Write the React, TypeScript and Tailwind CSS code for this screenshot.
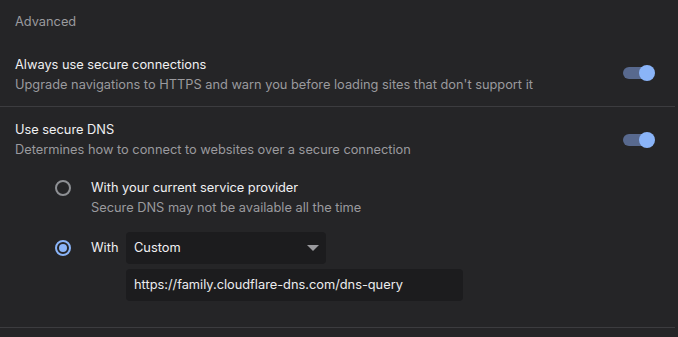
import { useState } from "react";

function Toggle({ on }: { on: boolean }) {
  return (
    <div className="relative h-[12px] w-[28px] shrink-0 rounded-full bg-[#58698e]">
      <span
        className={`absolute top-1/2 h-[16px] w-[16px] -translate-y-1/2 rounded-full bg-[#8ab4f8] ${
          on ? "right-[-4px]" : "left-[-4px]"
        }`}
      />
    </div>
  );
}

function Radio({ checked }: { checked: boolean }) {
  return (
    <span
      className={`flex h-[16px] w-[16px] shrink-0 items-center justify-center rounded-full border-2 ${
        checked ? "border-[#8ab4f8]" : "border-[#8e9094]"
      }`}
    >
      {checked && <span className="h-[8px] w-[8px] rounded-full bg-[#8ab4f8]" />}
    </span>
  );
}

export default function App() {
  const [mode] = useState<"provider" | "custom">("custom");

  return (
    <div
      className="h-[337px] w-[678px] overflow-hidden bg-[#252527] text-[12.8px] leading-[20px] text-[#e3e3e3]"
      style={{ fontFamily: "Inter, 'Liberation Sans', sans-serif" }}
    >
      <div className="w-[675px]">
        <div className="flex h-[40px] items-center px-[15px] pt-[3px] text-[#9a9a9e]">Advanced</div>

        <div className="flex h-[66px] items-center justify-between pl-[15px] pr-[24px]">
          <div className="pt-[3px]">
            <div className="text-[#f0f0f2]">Always use secure connections</div>
            <div className="text-[#9a9a9e]">
              Upgrade navigations to HTTPS and warn you before loading sites that don't support it
            </div>
          </div>
          <Toggle on />
        </div>

        <div className="border-t border-[#3c3c3f]">
          <div className="flex items-center justify-between pl-[15px] pr-[24px] pt-[13px]">
            <div>
              <div className="text-[#f0f0f2]">Use secure DNS</div>
              <div className="text-[#9a9a9e]">Determines how to connect to websites over a secure connection</div>
            </div>
            <Toggle on />
          </div>

          <div className="flex flex-col pb-[26px] pl-[55px] pt-[18px]">
            <div className="flex items-start gap-[20px]">
              <div className="mt-[2px]">
                <Radio checked={mode === "provider"} />
              </div>
              <div>
                <div className="text-[#f0f0f2]">With your current service provider</div>
                <div className="text-[#9a9a9e]">Secure DNS may not be available all the time</div>
              </div>
            </div>

            <div className="mt-[14px] flex items-center gap-[20px]">
              <Radio checked={mode === "custom"} />
              <div className="flex items-center gap-[7px]">
                <span className="w-[28px] text-[#f0f0f2]">With</span>
                <div className="flex h-[32px] w-[200px] items-center justify-between rounded-[4px] bg-[#1c1c1e] pl-[8px] pr-[7px] text-[#f0f0f2]">
                  <span>Custom</span>
                  <svg width="12" height="6" viewBox="0 0 12 6">
                    <path d="M0 0h12L6 6z" fill="#9a9a9e" />
                  </svg>
                </div>
              </div>
            </div>

            <div className="ml-[71px] mt-[5px] flex h-[32px] w-[337px] items-center rounded-[4px] bg-[#1c1c1e] px-[8px] text-[#ececee]">
              https://family.cloudflare-dns.com/dns-query
            </div>
          </div>
        </div>

        <div className="border-t border-[#3c3c3f]" />
      </div>
    </div>
  );
}
